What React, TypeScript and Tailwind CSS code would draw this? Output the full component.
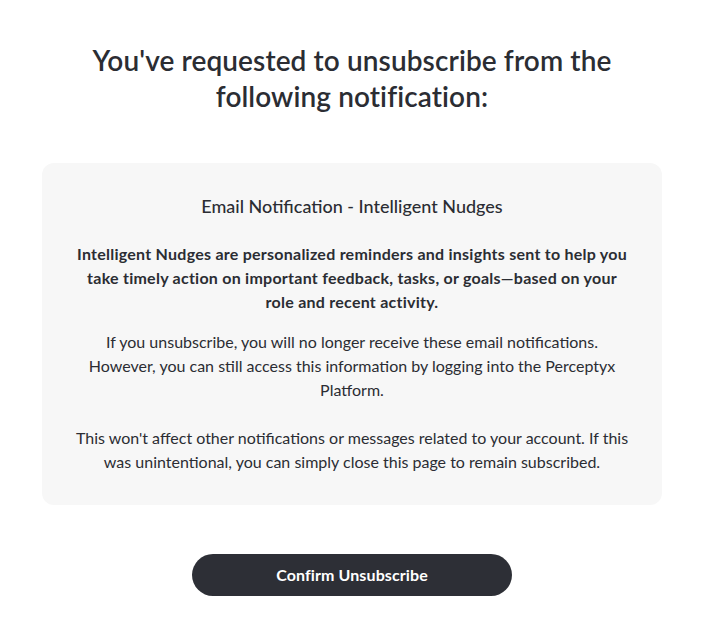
export default function App() {
  return (
    <div
      className="min-h-screen bg-white text-[#2b2d33]"
      style={{ fontFamily: '"Lato", "Open Sans", sans-serif' }}
    >
      <div className="mx-auto flex w-[620px] flex-col items-center pt-[42px]">
        <h1 className="text-center text-[28px] font-semibold leading-[36px] tracking-[0.1px]">
          You've requested to unsubscribe from the
          <br />
          following notification:
        </h1>

        <section className="mt-[49px] w-full rounded-xl bg-[#f7f7f7] px-6 pt-[31px] pb-[31px] text-center">
          <h2 className="text-[18px] font-medium leading-6">
            Email Notification - Intelligent Nudges
          </h2>
          <p className="mt-6 text-[16px] font-bold leading-6 tracking-[0.25px]">
            Intelligent Nudges are personalized reminders and insights sent to help you
            <br />
            take timely action on important feedback, tasks, or goals—based on your
            <br />
            role and recent activity.
          </p>
          <p className="mt-4 text-[16px] leading-6">
            If you unsubscribe, you will no longer receive these email notifications.
            <br />
            However, you can still access this information by logging into the Perceptyx
            <br />
            Platform.
          </p>
          <p className="mt-6 text-[16px] leading-6">
            This won't affect other notifications or messages related to your account. If this
            <br />
            was unintentional, you can simply close this page to remain subscribed.
          </p>
        </section>

        <button className="mt-[49px] h-[42px] w-[320px] rounded-full bg-[#2d2f36] text-[16px] font-bold tracking-[0.1px] text-white">
          Confirm Unsubscribe
        </button>
      </div>
    </div>
  );
}
